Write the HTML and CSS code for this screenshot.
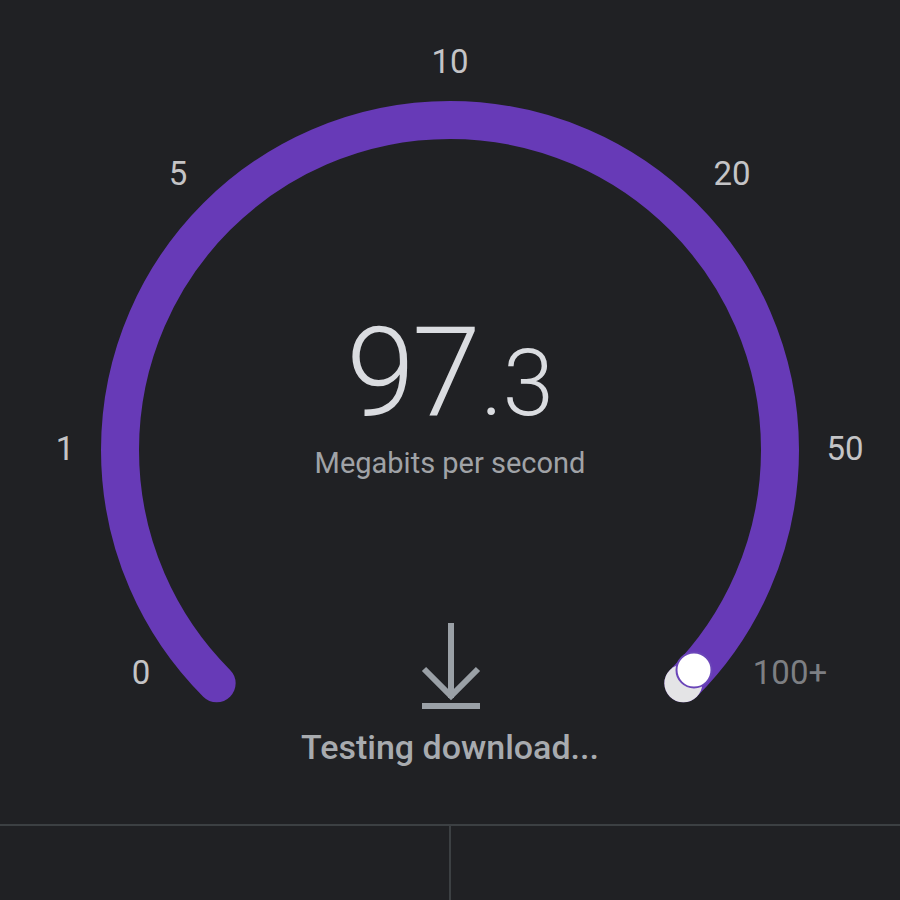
FILE: index.html
```html
<!DOCTYPE html>
<html lang="en">
<head>
<meta charset="utf-8">
<title>Speed test</title>
<link rel="stylesheet" href="styles.css">
</head>
<body>
<div class="page">
  <div class="gauge">
    <svg class="dial" width="900" height="824" viewBox="0 0 900 824" aria-hidden="true">
      <path class="arc" d="M216.65 683.35 A330 330 0 1 1 683.35 683.35"/>
      <circle class="arc-end" cx="683.35" cy="683.35" r="19"/>
      <circle class="knob" cx="694" cy="670" r="17.5"/>
    </svg>
    <span class="tick t0">0</span>
    <span class="tick t1">1</span>
    <span class="tick t5">5</span>
    <span class="tick t10">10</span>
    <span class="tick t20">20</span>
    <span class="tick t50">50</span>
    <span class="tick t100 dim">100+</span>

    <div class="readout">
      <div class="value"><span class="int">97</span><span class="frac">.3</span></div>
      <div class="unit">Megabits per second</div>
    </div>

    <div class="status">
      <svg class="dl-icon" width="60" height="90" viewBox="0 0 60 90" aria-hidden="true">
        <path d="M30 1 V76 M3 47 L30 74 L57 47" />
        <path d="M1 84 H59" />
      </svg>
      <div class="status-text">Testing download...</div>
    </div>
  </div>
  <div class="footer">
    <div class="cell"></div>
    <div class="cell"></div>
  </div>
</div>
</body>
</html>
```
FILE: styles.css
```css
html, body {
  margin: 0;
  padding: 0;
  background: #202124;
}

body {
  font-family: Roboto, "Noto Sans", "Liberation Sans", sans-serif;
  color: #c4c4c6;
}

.page {
  width: 900px;
  height: 900px;
  overflow: hidden;
  display: flex;
  flex-direction: column;
}

.gauge {
  position: relative;
  height: 824px;
  display: flex;
  flex-direction: column;
  align-items: center;
  padding-top: 311px;
  box-sizing: border-box;
}

.dial {
  position: absolute;
  left: 0;
  top: 0;
}

.arc {
  fill: none;
  stroke: #673ab7;
  stroke-width: 38;
  stroke-linecap: round;
}

.arc-end {
  fill: #e4e4e6;
}

.knob {
  fill: #ffffff;
  stroke: #6a45b8;
  stroke-width: 2;
}

.tick {
  position: absolute;
  font-size: 33px;
  line-height: 1;
  font-weight: 400;
  color: #c4c4c6;
  transform: translate(-50%, -50%);
  white-space: nowrap;
}

.tick.dim {
  color: #7d7f83;
}

.t0   { left: 141px; top: 672px; }
.t1   { left: 65px;  top: 448px; }
.t5   { left: 178px; top: 173px; }
.t10  { left: 450px; top: 61px; }
.t20  { left: 732px; top: 173px; }
.t50  { left: 845px; top: 448px; }
.t100 { left: 790px; top: 672px; }

.readout {
  position: relative;
  display: flex;
  flex-direction: column;
  align-items: center;
}

.value {
  font-weight: 300;
  color: #dadce0;
  line-height: 124px;
  height: 124px;
  white-space: nowrap;
}

.value .int {
  font-size: 124px;
  letter-spacing: -3px;
}

.value .frac {
  font-size: 92px;
  margin-left: 3px;
}

.unit {
  margin-top: 14px;
  font-size: 29px;
  line-height: 1;
  color: #a0a3a7;
}

.status {
  position: relative;
  margin-top: 144px;
  display: flex;
  flex-direction: column;
  align-items: center;
}

.dl-icon {
  display: block;
  margin-left: 2px;
}

.dl-icon path {
  fill: none;
  stroke: #9aa0a6;
  stroke-width: 6;
}

.status-text {
  margin-top: 18px;
  font-size: 34px;
  font-weight: 500;
  line-height: 1;
  color: #a8abaf;
}

.footer {
  flex: 1;
  display: flex;
  border-top: 2px solid #3c4043;
}

.cell {
  flex: 1;
}

.cell + .cell {
  border-left: 2px solid #3c4043;
}
```
